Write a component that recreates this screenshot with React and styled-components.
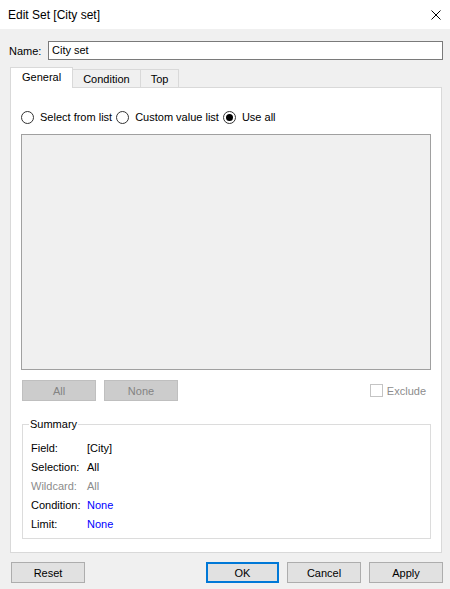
import React from 'react';
import styled, { createGlobalStyle } from 'styled-components';

const GlobalStyle = createGlobalStyle`
  html, body {
    margin: 0;
    padding: 0;
    background: #f0f0f0;
  }
  body {
    font-family: "Liberation Sans", Arial, sans-serif;
    font-size: 11px;
    color: #000;
  }
`;

const Window = styled.div`
  width: 450px;
  height: 589px;
  display: flex;
  flex-direction: column;
  background: #f0f0f0;
  box-sizing: border-box;
`;

const TitleBar = styled.div`
  height: 29px;
  flex: none;
  background: #fff;
  display: flex;
  align-items: center;
  justify-content: space-between;
  padding: 0 5px 0 8px;
  font-size: 12px;
`;

const CloseIcon = styled.svg`
  width: 10px;
  height: 10px;
  margin-right: 4px;
`;

const Body = styled.div`
  display: flex;
  flex-direction: column;
  padding: 0 7px 0 9px;
`;

const NameRow = styled.div`
  display: flex;
  align-items: center;
  margin-top: 12px;
  height: 19px;
`;

const NameLabel = styled.label`
  width: 39px;
  flex: none;
`;

const NameInput = styled.div`
  flex: 1;
  height: 19px;
  box-sizing: border-box;
  border: 1px solid #7a7a7a;
  background: #fff;
  padding: 0 3px;
  line-height: 17px;
`;

const TabStrip = styled.div`
  display: flex;
  align-items: flex-end;
  height: 20px;
  margin: 7px 1px 0 1px;
  position: relative;
  z-index: 1;
`;

const Tab = styled.div`
  box-sizing: border-box;
  height: ${p => (p.$active ? '21px' : '18px')};
  margin-bottom: ${p => (p.$active ? '-1px' : '0')};
  margin-left: ${p => (p.$first ? '0' : '-1px')};
  padding: 0 ${p => (p.$active ? '11px' : '10px')};
  border: 1px solid #d9d9d9;
  border-bottom: none;
  background: ${p => (p.$active ? '#fff' : '#f0f0f0')};
  display: flex;
  align-items: center;
  padding-bottom: ${p => (p.$active ? '2px' : '0')};
`;

const Panel = styled.div`
  margin: 0 1px 0 1px;
  height: 466px;
  box-sizing: border-box;
  border: 1px solid #d9d9d9;
  background: #fff;
  padding: 0 10px;
  display: flex;
  flex-direction: column;
`;

const RadioRow = styled.div`
  display: flex;
  align-items: center;
  gap: 4px;
  height: 16px;
  margin-top: 21px;
`;

const RadioOption = styled.label`
  display: flex;
  align-items: center;
  gap: 6px;
`;

const RadioCircle = styled.span`
  width: 13px;
  height: 13px;
  box-sizing: border-box;
  border: 1px solid #333;
  border-radius: 50%;
  background: #fff;
  display: flex;
  align-items: center;
  justify-content: center;
  &::after {
    content: '';
    width: 7px;
    height: 7px;
    border-radius: 50%;
    background: ${p => (p.$checked ? '#000' : 'transparent')};
  }
`;

const ListBox = styled.div`
  margin-top: 9px;
  height: 236px;
  box-sizing: border-box;
  border: 1px solid #a0a0a0;
  background: #f0f0f0;
`;

const ButtonRow = styled.div`
  display: flex;
  align-items: center;
  gap: 8px;
  margin-top: 10px;
  padding-left: 1px;
  height: 21px;
`;

const DisabledButton = styled.button`
  width: 74px;
  height: 21px;
  box-sizing: border-box;
  border: 1px solid #bfbfbf;
  background: #cccccc;
  color: #838383;
  font: inherit;
  padding: 0;
`;

const ExcludeBox = styled.label`
  margin-left: auto;
  margin-right: 5px;
  display: flex;
  align-items: center;
  gap: 4px;
  color: #8d8d8d;
`;

const CheckSquare = styled.span`
  width: 13px;
  height: 13px;
  box-sizing: border-box;
  border: 1px solid #c4c4c4;
  background: #fff;
`;

const GroupBox = styled.fieldset`
  margin: 16px 0 0 1px;
  padding: 7px 8px 5px 8px;
  border: 1px solid #dcdcdc;
  min-width: 0;
`;

const GroupLegend = styled.legend`
  padding: 0 1px;
  margin-left: -2px;
  line-height: 14px;
`;

const SummaryGrid = styled.div`
  display: grid;
  grid-template-columns: 56px 1fr;
  grid-auto-rows: 19px;
  align-items: center;
`;

const SummaryLabel = styled.span`
  color: ${p => (p.$muted ? '#8c8c8c' : '#000')};
`;

const SummaryValue = styled.span`
  color: ${p => (p.$link ? '#0000ff' : p.$muted ? '#8c8c8c' : '#000')};
`;

const Footer = styled.div`
  display: flex;
  align-items: center;
  margin-top: 9px;
  padding-left: 2px;
  height: 21px;
`;

const FooterRight = styled.div`
  margin-left: auto;
  display: flex;
  gap: 8px;
`;

const DialogButton = styled.button`
  width: ${p => (p.$default ? '73px' : '74px')};
  height: 21px;
  box-sizing: border-box;
  border: ${p => (p.$default ? '2px solid #0078d7' : '1px solid #adadad')};
  background: #e1e1e1;
  color: #000;
  font: inherit;
  padding: 0;
`;

const summary = [
  { label: 'Field:', value: '[City]' },
  { label: 'Selection:', value: 'All' },
  { label: 'Wildcard:', value: 'All', muted: true },
  { label: 'Condition:', value: 'None', link: true },
  { label: 'Limit:', value: 'None', link: true },
];

export default function App() {
  return (
    <>
      <GlobalStyle />
      <Window>
        <TitleBar>
          <span>Edit Set [City set]</span>
          <CloseIcon viewBox="0 0 10 10">
            <path d="M0.5 0.5 L9.5 9.5 M9.5 0.5 L0.5 9.5" stroke="#000" strokeWidth="1" fill="none" />
          </CloseIcon>
        </TitleBar>
        <Body>
          <NameRow>
            <NameLabel>Name:</NameLabel>
            <NameInput>City set</NameInput>
          </NameRow>
          <TabStrip>
            <Tab $active $first>General</Tab>
            <Tab>Condition</Tab>
            <Tab>Top</Tab>
          </TabStrip>
          <Panel>
            <RadioRow>
              <RadioOption><RadioCircle />Select from list</RadioOption>
              <RadioOption><RadioCircle />Custom value list</RadioOption>
              <RadioOption><RadioCircle $checked />Use all</RadioOption>
            </RadioRow>
            <ListBox />
            <ButtonRow>
              <DisabledButton disabled>All</DisabledButton>
              <DisabledButton disabled>None</DisabledButton>
              <ExcludeBox><CheckSquare />Exclude</ExcludeBox>
            </ButtonRow>
            <GroupBox>
              <GroupLegend>Summary</GroupLegend>
              <SummaryGrid>
                {summary.map(row => (
                  <React.Fragment key={row.label}>
                    <SummaryLabel $muted={row.muted}>{row.label}</SummaryLabel>
                    <SummaryValue $muted={row.muted} $link={row.link}>{row.value}</SummaryValue>
                  </React.Fragment>
                ))}
              </SummaryGrid>
            </GroupBox>
          </Panel>
          <Footer>
            <DialogButton>Reset</DialogButton>
            <FooterRight>
              <DialogButton $default>OK</DialogButton>
              <DialogButton>Cancel</DialogButton>
              <DialogButton>Apply</DialogButton>
            </FooterRight>
          </Footer>
        </Body>
      </Window>
    </>
  );
}
